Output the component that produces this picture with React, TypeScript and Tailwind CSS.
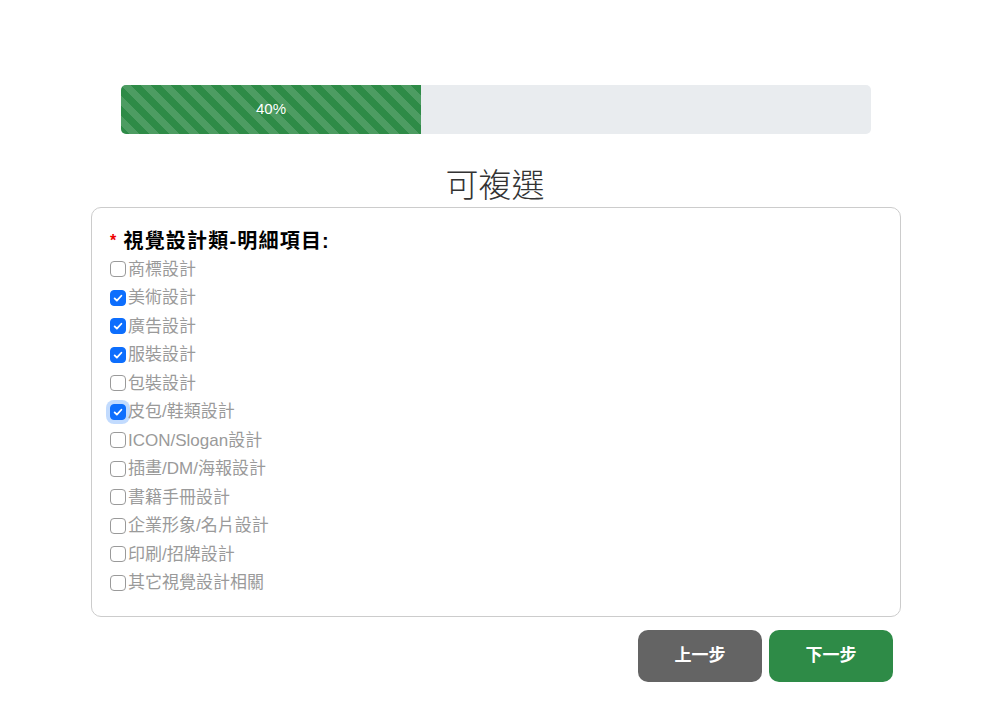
import React from 'react';

const items = [
  { label: '商標設計', checked: false },
  { label: '美術設計', checked: true },
  { label: '廣告設計', checked: true },
  { label: '服裝設計', checked: true },
  { label: '包裝設計', checked: false },
  { label: '皮包/鞋類設計', checked: true, focused: true },
  { label: 'ICON/Slogan設計', checked: false },
  { label: '插畫/DM/海報設計', checked: false },
  { label: '書籍手冊設計', checked: false },
  { label: '企業形象/名片設計', checked: false },
  { label: '印刷/招牌設計', checked: false },
  { label: '其它視覺設計相關', checked: false },
];

const font = "font-['Liberation_Sans','Noto_Sans_CJK_TC',sans-serif]";

const Check: React.FC<{ checked: boolean; focused?: boolean }> = ({ checked, focused }) => (
  <span
    className={`w-4 h-4 shrink-0 rounded-[4px] flex items-center justify-center ${
      checked ? 'bg-[#0d6efd] border border-[#0d6efd]' : 'bg-white border border-[#9a9a9a]'
    } ${focused ? 'ring-4 ring-[#0d6efd]/25' : ''}`}
  >
    {checked && (
      <svg viewBox="0 0 16 16" className="w-3 h-3" fill="none">
        <path d="M3.5 8.5l3 3 6-6.5" stroke="white" strokeWidth="2.4" strokeLinecap="round" strokeLinejoin="round" />
      </svg>
    )}
  </span>
);

export default function App() {
  return (
    <div className={`w-[990px] min-h-[716px] bg-white ${font}`}>
      <div className="pt-[85px] px-[121px]">
        <div className="h-[49px] w-[750px] bg-[#e9ecef] rounded-[5px] overflow-hidden flex">
          <div
            className="w-[300px] h-full bg-[#2e8b47] flex items-center justify-center text-white text-[15px]"
            style={{
              backgroundImage:
                'linear-gradient(45deg, rgba(255,255,255,.15) 25%, transparent 25%, transparent 50%, rgba(255,255,255,.15) 50%, rgba(255,255,255,.15) 75%, transparent 75%, transparent)',
              backgroundSize: '20px 20px',
            }}
          >
            40%
          </div>
        </div>
      </div>

      <h2 className="mt-[27px] mb-[2px] text-center text-[33px] leading-[44px] font-light text-[#333] font-['Noto_Sans_CJK_TC',sans-serif]">
        可複選
      </h2>

      <div className="mx-[91px] w-[810px] border border-[#cccccc] rounded-[10px] pt-[20px] pb-[19px] px-[18px]">
        <div className="text-[20px] tracking-[1.2px] font-bold text-black leading-[26px] flex items-center">
          <span className="text-[#e00] text-[16px] mr-[6px]">*</span>
          視覺設計類-明細項目:
        </div>
        <ul className="mt-[1px]">
          {items.map((it) => (
            <li key={it.label} className="h-[28.5px] flex items-center text-[17px] text-[#9a9a9a]">
              <Check checked={it.checked} focused={it.focused} />
              <span className="ml-[2px]">{it.label}</span>
            </li>
          ))}
        </ul>
      </div>

      <div className="w-[893px] flex justify-end gap-[7px] mt-[13px]">
        <button className="w-[124px] h-[52px] rounded-[10px] bg-[#646464] text-white font-bold text-[17px]">
          上一步
        </button>
        <button className="w-[124px] h-[52px] rounded-[10px] bg-[#2e8b47] text-white font-bold text-[17px]">
          下一步
        </button>
      </div>
    </div>
  );
}
